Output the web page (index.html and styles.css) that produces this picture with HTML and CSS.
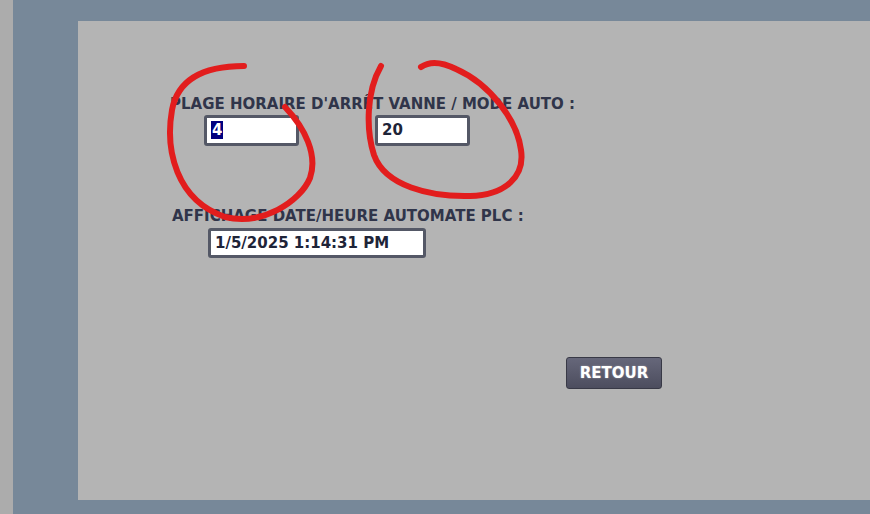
FILE: index.html
```html
<!DOCTYPE html>
<html lang="fr">

<head>
    <meta charset="UTF-8">
    <meta name="viewport" content="width=device-width, initial-scale=1.0">
    <title>Plage horaire vanne</title>
    <link rel="stylesheet" href="styles.css">
</head>

<body>
    <div class="screen">
        <div class="side-strip"></div>

        <div class="workspace">
            <div class="panel">
                <div class="block block-plage">
                    <div class="label">PLAGE HORAIRE D'ARRÊT VANNE / MODE AUTO :</div>
                    <div class="field-row">
                        <div class="field field-small"><span class="selected">4</span></div>
                        <div class="field field-small">20</div>
                    </div>
                </div>

                <div class="block block-date">
                    <div class="label">AFFICHAGE DATE/HEURE AUTOMATE PLC :</div>
                    <div class="field field-wide">1/5/2025 1:14:31 PM</div>
                </div>

                <div class="actions">
                    <button class="btn-retour">RETOUR</button>
                </div>
            </div>
        </div>

        <!-- annotations au feutre rouge -->
        <svg class="marks" width="870" height="514" viewBox="0 0 870 514">
            <path d="M244,66 C205,66 178,78 172,110 C165,150 176,200 225,217 C262,226 300,202 310,178 C318,155 305,128 285,107" />
            <path d="M381,66 C366,92 366,130 374,155 C385,186 430,197 470,196 C506,195 525,176 521,150 C517,120 490,84 456,69 C440,61 428,62 421,67" />
        </svg>
    </div>
</body>

</html>
```

FILE: styles.css
```css
body {
    margin: 0;
    padding: 0;
    background-color: #778899;
    font-family: 'DejaVu Sans', Verdana, sans-serif;
    color: #30354a;
}

.screen {
    position: relative;
    display: flex;
    width: 870px;
    height: 514px;
    overflow: hidden;
}

.side-strip {
    width: 13px;
    flex-shrink: 0;
    background-color: #acacac;
}

.workspace {
    flex-grow: 1;
    padding: 21px 0 14px 65px;
}

.panel {
    height: 479px;
    background-color: #b4b4b4;
    padding-top: 74px;
    box-sizing: border-box;
}

.label {
    font-size: 15px;
    font-weight: bold;
    line-height: 18px;
    white-space: nowrap;
}

.block-plage {
    margin-left: 92px;
}

.field-row {
    display: flex;
    gap: 76px;
    margin-top: 2px;
    padding-left: 34px;
}

.field {
    box-sizing: border-box;
    height: 31px;
    padding: 0 0 0 4px;
    background-color: #ffffff;
    border: 3px solid #545866;
    border-radius: 3px;
    font-size: 15px;
    font-weight: bold;
    line-height: 25px;
    color: #1e2438;
}

.field-small {
    width: 95px;
}

.field-wide {
    width: 218px;
    height: 30px;
    line-height: 24px;
}

.selected {
    background-color: #000080;
    color: #ffffff;
    padding: 0 1px;
}

.block-date {
    margin-top: 61px;
    margin-left: 94px;
}

.block-date .field {
    margin-top: 3px;
    margin-left: 36px;
}

.actions {
    margin-top: 99px;
    padding-left: 488px;
}

.btn-retour {
    width: 96px;
    height: 32px;
    padding: 0;
    background: linear-gradient(#66677a, #4c4d5e);
    border: 1px solid #383946;
    border-radius: 3px;
    color: #ffffff;
    font-family: 'DejaVu Sans', Verdana, sans-serif;
    font-size: 15px;
    font-weight: bold;
    text-shadow: 0 0 2px rgba(255, 255, 255, 0.4);
    cursor: pointer;
}

.marks {
    position: absolute;
    left: 0;
    top: 0;
    pointer-events: none;
}

.marks path {
    fill: none;
    stroke: #e21d1d;
    stroke-width: 6;
    stroke-linecap: round;
    stroke-linejoin: round;
}
```
